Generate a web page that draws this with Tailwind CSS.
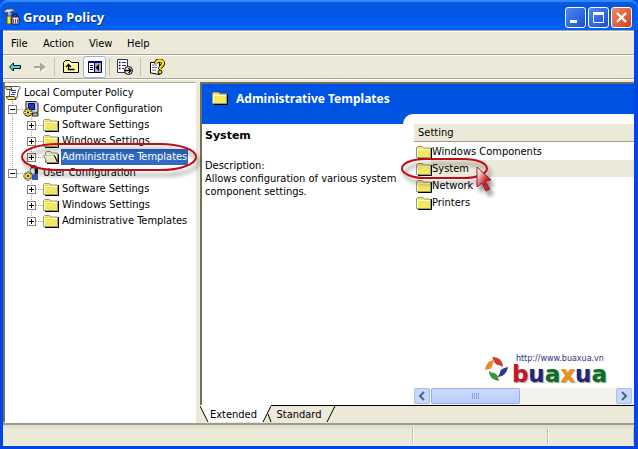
<!DOCTYPE html>
<html lang="en">
<head>
<meta charset="utf-8">
<title>Group Policy</title>
<script src="https://cdn.jsdelivr.net/npm/@tailwindcss/browser@4"></script>
</head>
<body class="bg-[#0a50e0]">
<svg class="absolute h-0 w-0" aria-hidden="true">
  <defs>
    <pattern id="dots" width="2" height="2" patternUnits="userSpaceOnUse"><path fill="#ffee00" d="M0 0h2v2h-2z"/><path fill="#e6e3c0" d="M0 0h1v1h-1zM1 1h1v1h-1z"/></pattern>
    <filter id="soft" x="-20%" y="-40%" width="150%" height="200%"><feDropShadow dx="3" dy="5" stdDeviation="2" flood-opacity=".45"/></filter>
  </defs>
  <symbol id="folder" viewBox="0 0 16 14"><path d="M2 13.500h13.500V3" fill="none" stroke="#000"/><path d="M.5 12.500v-10l1-1h5l1.500 1.500h6.500v9.500z" fill="url(#dots)" stroke="#9c9a70"/><path d="M1.500 12V4.500H14" fill="none" stroke="#fffde0"/></symbol>
  <symbol id="openfolder" viewBox="0 0 16 14"><path d="M2.500 12.500v-10l1-1h4l1.500 1.500h5.500v9.500z" fill="#f4f0b4" stroke="#88887c"/><path d="M15.500 4v9.500H4" fill="none" stroke="#000"/><path d="M.5 5.500h10.500l3.500 7H4z" fill="#e9e6c0" stroke="#88887c"/><path d="M1.500 6h9" stroke="#fff"/><path d="M11.500 5.500l3 6.500" stroke="#000"/></symbol>
</svg>
<div class="flex min-h-screen flex-col rounded-t-lg border-r-4 border-b-3 border-l-3 border-[#0046e6] bg-[#ece9d8] font-['DejaVu_Sans_Condensed','DejaVu_Sans',sans-serif] text-[11px] leading-4 text-black">
  <header class="-mr-1 -ml-[3px] flex h-[30px] shrink-0 items-center rounded-t-lg bg-linear-to-b from-[#0a55dc] via-[#0058e6] to-[#0060f8] pt-1 pr-1.5 pl-1 shadow-[inset_0_2px_1px_#2f8cff]">
    <svg class="h-4 w-4" viewBox="0 0 16 16" aria-hidden="true"><path d="M0 2l3-2h6l2 3-3-1-2 2H4L3 3 1 4z" fill="#ddd" stroke="#333" stroke-width=".7"/><path d="M4 4h3v4H4z" fill="#aaa"/><path d="M3 7h4v8H3z" fill="#ffe84a" stroke="#655500"/><path d="M8 8h7v7H8z" fill="#eee" stroke="#222"/><path d="M9 7V5h4v2" fill="none" stroke="#111"/><path d="M9.500 10v4M11.500 10v4M13.500 10v4" stroke="#8d338d"/></svg>
    <h1 class="ml-[3px] flex-1 font-['Noto_Sans',sans-serif] text-[13px] leading-5 font-bold text-white [text-shadow:1px_1px_0_#0a2c8c]">Group Policy</h1>
    <div class="flex gap-0.5">
      <button aria-label="Minimize" class="h-[21px] w-[21px] rounded-[3px] border border-white bg-linear-to-br from-[#4b88f5] to-[#1c4fd4]"><svg viewBox="0 0 19 19" aria-hidden="true"><path d="M4 12h7v3H4z" fill="#fff"/></svg></button>
      <button aria-label="Maximize" class="h-[21px] w-[21px] rounded-[3px] border border-white bg-linear-to-br from-[#4b88f5] to-[#1c4fd4]"><svg viewBox="0 0 19 19" aria-hidden="true"><path d="M4.500 5v9.500h10V5" fill="none" stroke="#fff"/><path d="M4 4h11v3H4z" fill="#fff"/></svg></button>
      <button aria-label="Close" class="h-[21px] w-[21px] rounded-[3px] border border-white bg-linear-to-br from-[#f08a68] to-[#d03c10]"><svg viewBox="0 0 19 19" aria-hidden="true"><path d="M5 5l9 9M14 5l-9 9" stroke="#fff" stroke-width="2.400"/></svg></button>
    </div>
  </header>

  <nav class="flex h-[25px] shrink-0 items-center border-t border-b border-t-[#aca899] border-b-[#aca899] pt-0.5 pl-2 shadow-[inset_1px_1px_0_#fff]" aria-label="Menu">
    <button class="w-8 text-left">File</button>
    <button class="w-[46px] text-left">Action</button>
    <button class="w-[38px] text-left">View</button>
    <button class="w-8 text-left">Help</button>
  </nav>

  <div class="flex h-6 shrink-0 items-center border-b border-[#aca899] shadow-[inset_1px_1px_0_#fff]" role="toolbar" aria-label="Toolbar">
    <button aria-label="Back" class="w-6"><svg class="mx-auto h-4 w-4" viewBox="0 0 16 16"><path d="M2.500 8l4-4v2.500h7v3h-7V12z" fill="#20e8f0" stroke="#000" stroke-linejoin="round"/></svg></button>
    <button aria-label="Forward" class="ml-px w-6"><svg class="mx-auto h-4 w-4" viewBox="0 0 16 16"><path d="M3 10h7v3l5-4" stroke="#fff" fill="none"/><path d="M2 7h6V3.500L13.500 8 8 12.500V9H2z" fill="#aca899"/></svg></button>
    <span class="mr-1 ml-0.5 h-[18px] w-px bg-[#c5c2b2]"></span>
    <button aria-label="Up one level" class="w-6"><svg class="mx-auto h-4 w-4" viewBox="0 0 16 16"><path d="M.5 13.500v-10l2-2h4l2 2h7v10z" fill="#fff8a0" stroke="#000"/><path d="M5.500 6v4.500h6M3 8l2.500-2.500L8 8" fill="none" stroke="#000" stroke-width="1.300"/></svg></button>
    <button aria-label="Show or hide console tree" aria-pressed="true" class="h-[22px] w-[23px] rounded-[3px] border border-[#98b5e2] bg-white"><svg class="mx-auto h-[14px] w-4" viewBox="0 0 16 14"><path d="M1.500 1.500h13v11h-13z" fill="#fff" stroke="#000068"/><path d="M1 1h14v2H1z" fill="#000080"/><path d="M8 3h6v9H8z" fill="#aaa"/><path d="M7.500 3v10M3 5.500h3M3 7.500h3M3 9.500h3" stroke="#000068"/><path d="M12 4v7L8.500 7.500z" fill="#000"/></svg></button>
    <span class="mr-1 ml-[3px] h-[18px] w-px bg-[#c5c2b2]"></span>
    <button aria-label="Export list" class="w-[22px]"><svg class="mx-auto h-4 w-4" viewBox="0 0 16 16"><path d="M.5.5h10v13H.5z" fill="#fff" stroke="#303060"/><path d="M2 3.500h1.500M2 6.500h1.500M2 9.500h1.500" stroke="#000" stroke-width="1.500"/><path d="M5 3.500h4M5 6.500h4M5 9.500h2" stroke="#2020a0"/><circle cx="11.500" cy="11.500" r="4" fill="#eee" stroke="#000"/><path d="M8 11.500h6M11.500 9l2.500 2.500-2.500 2.500" stroke="#000" stroke-width="1.300" fill="none"/></svg></button>
    <span class="mr-1 ml-1 h-[18px] w-px bg-[#c5c2b2]"></span>
    <button aria-label="Help" class="w-6"><svg class="mx-auto h-4 w-4" viewBox="0 0 16 16"><path d="M1.500 3.500h9v12l-9-1.500z" fill="#fff" stroke="#000"/><path d="M3 6h5M3 8.500h5M3 11h4" stroke="#777"/><path d="M7 4.500C7 .5 14 .5 14 4.500c0 2.500-3 2.300-3 5.500" fill="none" stroke="#000" stroke-width="4"/><path d="M7 4.500C7 .5 14 .5 14 4.500c0 2.500-3 2.300-3 5.500" fill="none" stroke="#ffe800" stroke-width="2.300"/><circle cx="11" cy="13" r="2" fill="#ffe800" stroke="#000"/></svg></button>
  </div>

  <main class="flex min-h-[345px] flex-1 gap-1 border-b-2 border-[#9d9a8b] pt-[3px] shadow-[inset_0_1px_0_#fff]">
    <section class="relative w-[193px] shrink-0 border-t border-r border-b border-l-2 border-t-[#aca899] border-r-white border-b-white border-l-[#716f64] bg-white pt-0.5" aria-label="Console tree">
      <ul>
        <li>
          <div class="flex h-4 items-center"><svg class="h-4 w-4" viewBox="0 0 16 16" aria-hidden="true"><path d="M5 1.500h8.500c2 0 2 3 0 3L12 13H4l1-8z" fill="#fff" stroke="#555"/><path d="M.5 1.500h5l1.500 3H1.500z" fill="#ffe94a" stroke="#444"/><path d="M1 11.500h8.500l1.500 3H3z" fill="#ffe94a" stroke="#444"/><path d="M6 5.500h5M7 7.500h4M6 9.500h4" stroke="#1838d0"/></svg><span class="ml-[3px]">Local Computer Policy</span></div>
          <ul class="ml-[7px] bg-[repeating-linear-gradient(to_bottom,#aca899_0_1px,transparent_1px_2px)] bg-[length:1px_72px] bg-no-repeat">
            <li>
              <div class="-ml-1 flex h-4 items-center"><button aria-label="Collapse Computer Configuration" class="h-[9px] w-[9px] border border-[#848478] bg-white"><svg class="h-[7px] w-[7px]" viewBox="0 0 7 7"><path d="M1 3.500h5" stroke="#000"/></svg></button><i class="w-1.5 border-t border-dotted border-[#aca899]"></i>
                <svg class="h-4 w-4" viewBox="0 0 16 16" aria-hidden="true"><path d="M3 .5h10l2 2v9l-2 1H3z" fill="#c9c9d4" stroke="#222"/><path d="M5.500 2.500h6v6h-6z" fill="#1838c8" stroke="#000060"/><path d="M10 12h5v3H9z" fill="#bbb" stroke="#222"/><path d="M5 7v9M.5 11.500h9M2 8.500l6 6M8 8.500l-6 6" stroke="#222" stroke-width="2.400"/><path d="M5 7.500v8M1 11.500h8M2.500 9l5 5M7.500 9l-5 5" stroke="#ffe94a" stroke-width="1.400"/><circle cx="5" cy="11.500" r="1"/></svg><span class="ml-1">Computer Configuration</span></div>
              <ul class="ml-[19px] bg-[repeating-linear-gradient(to_bottom,#aca899_0_1px,transparent_1px_2px)] bg-[length:1px_40px] bg-no-repeat">
                <li class="-ml-1 flex h-4 items-center"><button aria-label="Expand" class="h-[9px] w-[9px] border border-[#848478] bg-white"><svg class="h-[7px] w-[7px]" viewBox="0 0 7 7"><path d="M1 3.500h5M3.500 1v5" stroke="#000"/></svg></button><i class="w-[7px] border-t border-dotted border-[#aca899]"></i><svg class="h-[14px] w-4"><use href="#folder"/></svg><span class="ml-0.5 px-px">Software Settings</span></li>
                <li class="-ml-1 flex h-4 items-center"><button aria-label="Expand" class="h-[9px] w-[9px] border border-[#848478] bg-white"><svg class="h-[7px] w-[7px]" viewBox="0 0 7 7"><path d="M1 3.500h5M3.500 1v5" stroke="#000"/></svg></button><i class="w-[7px] border-t border-dotted border-[#aca899]"></i><svg class="h-[14px] w-4"><use href="#folder"/></svg><span class="ml-0.5 px-px">Windows Settings</span></li>
                <li class="-ml-1 flex h-4 items-center"><button aria-label="Expand" class="h-[9px] w-[9px] border border-[#848478] bg-white"><svg class="h-[7px] w-[7px]" viewBox="0 0 7 7"><path d="M1 3.500h5M3.500 1v5" stroke="#000"/></svg></button><i class="w-[7px] border-t border-dotted border-[#aca899]"></i><svg class="h-[14px] w-4"><use href="#openfolder"/></svg><span class="ml-0.5 bg-[#316ac5] px-px whitespace-nowrap text-white">Administrative Templates</span></li>
              </ul>
            </li>
            <li>
              <div class="-ml-1 flex h-4 items-center"><button aria-label="Collapse User Configuration" class="h-[9px] w-[9px] border border-[#848478] bg-white"><svg class="h-[7px] w-[7px]" viewBox="0 0 7 7"><path d="M1 3.500h5" stroke="#000"/></svg></button><i class="w-1.5 border-t border-dotted border-[#aca899]"></i>
                <svg class="h-4 w-4" viewBox="0 0 16 16" aria-hidden="true"><path d="M7 1c3-2 8-1 8 4v4h-3z" fill="#111"/><path d="M8 3h4v6H9L7 6z" fill="#fff" stroke="#222" stroke-width=".7"/><path d="M9 10l6-2v7H9z" fill="#3058c8"/><path d="M5 6.500v9M.5 11h9M2 8l6 6M8 8l-6 6" stroke="#222" stroke-width="2.400"/><path d="M5 7v8M1 11h8M2.500 8.500l5 5M7.500 8.500l-5 5" stroke="#ffe94a" stroke-width="1.400"/><circle cx="5" cy="11" r="1"/></svg><span class="ml-1">User Configuration</span></div>
              <ul class="ml-[19px] bg-[repeating-linear-gradient(to_bottom,#aca899_0_1px,transparent_1px_2px)] bg-[length:1px_40px] bg-no-repeat">
                <li class="-ml-1 flex h-4 items-center"><button aria-label="Expand" class="h-[9px] w-[9px] border border-[#848478] bg-white"><svg class="h-[7px] w-[7px]" viewBox="0 0 7 7"><path d="M1 3.500h5M3.500 1v5" stroke="#000"/></svg></button><i class="w-[7px] border-t border-dotted border-[#aca899]"></i><svg class="h-[14px] w-4"><use href="#folder"/></svg><span class="ml-0.5 px-px">Software Settings</span></li>
                <li class="-ml-1 flex h-4 items-center"><button aria-label="Expand" class="h-[9px] w-[9px] border border-[#848478] bg-white"><svg class="h-[7px] w-[7px]" viewBox="0 0 7 7"><path d="M1 3.500h5M3.500 1v5" stroke="#000"/></svg></button><i class="w-[7px] border-t border-dotted border-[#aca899]"></i><svg class="h-[14px] w-4"><use href="#folder"/></svg><span class="ml-0.5 px-px">Windows Settings</span></li>
                <li class="-ml-1 flex h-4 items-center"><button aria-label="Expand" class="h-[9px] w-[9px] border border-[#848478] bg-white"><svg class="h-[7px] w-[7px]" viewBox="0 0 7 7"><path d="M1 3.500h5M3.500 1v5" stroke="#000"/></svg></button><i class="w-[7px] border-t border-dotted border-[#aca899]"></i><svg class="h-[14px] w-4"><use href="#folder"/></svg><span class="ml-0.5 px-px whitespace-nowrap">Administrative Templates</span></li>
              </ul>
            </li>
          </ul>
        </li>
      </ul>
      <svg class="pointer-events-none absolute top-[57px] left-[14px] z-10 h-[44px] w-[190px]" viewBox="0 0 190 44" fill="none" aria-hidden="true"><rect x="3" y="4" width="174" height="26" rx="36" ry="13" stroke="#c01018" stroke-width="2" filter="url(#soft)"/></svg>
    </section>

    <section class="flex min-w-0 flex-1 flex-col" aria-label="Details">
      <div class="flex flex-1 flex-col border-t-2 border-l-2 border-[#716f64] bg-white">
        <div class="flex h-10 shrink-0 bg-[#0054e3]">
          <div class="flex w-[201px] shrink-0 items-start pt-[7px] pl-2.5"><svg class="h-[14px] w-4 shrink-0"><use href="#folder"/></svg><h2 class="ml-2 font-['Noto_Sans',sans-serif] text-[12px] leading-4 font-bold whitespace-nowrap text-white">Administrative Templates</h2></div>
          <div class="mt-[30px] flex-1 rounded-tl-[10px] bg-white"></div>
        </div>
        <div class="flex flex-1">
          <div class="w-[212px] shrink-0 pt-1 pl-[3px]">
            <h3 class="font-['DejaVu_Sans',sans-serif] text-[11px] leading-4 font-bold">System</h3>
            <p class="mt-[15px] w-[200px] leading-[13px]">Description:<br>Allows configuration of various system component settings.</p>
          </div>
          <div class="relative flex min-w-0 flex-1 flex-col">
            <table class="w-full border-separate border-spacing-0">
              <thead><tr><th class="h-[17px] border-b border-[#9d9a8b] bg-[#ece9d8] p-0 pt-px pl-1 text-left leading-4 font-normal">Setting</th></tr><tr class="h-px"></tr></thead>
              <tbody>
                <tr><td class="h-[17px] p-0 pl-0.5"><div class="flex items-center"><svg class="h-[14px] w-4"><use href="#folder"/></svg>Windows Components</div></td></tr>
                <tr><td class="h-[17px] bg-linear-to-r from-white from-[17px] to-[#ece9d8] to-[17px] p-0 pl-0.5"><div class="flex items-center"><svg class="h-[14px] w-4"><use href="#folder"/></svg>System</div></td></tr>
                <tr><td class="h-[17px] p-0 pl-0.5"><div class="flex items-center"><svg class="h-[14px] w-4"><use href="#folder"/></svg>Network</div></td></tr>
                <tr><td class="h-[17px] p-0 pl-0.5"><div class="flex items-center"><svg class="h-[14px] w-4"><use href="#folder"/></svg>Printers</div></td></tr>
              </tbody>
            </table>
            <svg class="pointer-events-none absolute top-[30px] left-[-16px] h-[42px] w-[104px]" viewBox="0 0 104 42" fill="none" aria-hidden="true"><rect x="4" y="5" width="85" height="19" rx="23" ry="9.500" stroke="#c01018" stroke-width="2" filter="url(#soft)"/></svg>
            <svg class="pointer-events-none absolute top-[42px] left-[62px] h-8 w-6" viewBox="0 0 24 32" aria-hidden="true"><defs><linearGradient id="arrow" x1="0" y1="0" x2="1" y2="1"><stop offset=".1" stop-color="#fff"/><stop offset=".6" stop-color="#d02028"/></linearGradient></defs><path d="M1 1l14 13-6 1 5 8-4 2-4-8-5 4z" fill="url(#arrow)" stroke="#902028" filter="url(#soft)"/></svg>
            <div class="mt-auto mr-[27px] mb-[3px] flex items-end justify-end gap-1">
              <svg class="mb-1 h-6 w-[23px]" viewBox="0 0 23 24" aria-hidden="true"><path d="M7 0c7 0 11 4 11 10-2-1-3-2-5-2-4-1-4-5-6-8z" fill="#d03a28"/><path d="M23 10c-1 6-5 10-11 10 2-2 3-3 3-5 1-4 5-4 8-5z" fill="#283c90"/><path d="M14 24C8 23 4 20 4 14c2 1 3 2 5 2 4 1 4 5 5 8z" fill="#38953c"/><path d="M0 13C1 7 4 3 10 3 8 5 8 7 7 9c-1 4-4 3-7 4z" fill="#f0862c"/></svg>
              <div class="font-['DejaVu_Sans',sans-serif]"><div class="pl-1 text-[8px] leading-[10px] text-[#303080]">http://www.buaxua.vn</div><div class="text-[23px] leading-[21px] font-bold [text-shadow:1px_1px_1px_#999]"><span class="text-[#c01828]">b</span><span class="text-[#242480]">u</span><span class="text-[#087020]">a</span><span class="text-[#f09010]">x</span><span class="text-[#242480]">u</span><span class="text-[#087020]">a</span></div></div>
            </div>
            <div class="flex h-[17px] shrink-0 bg-[#f3f2ed]">
              <button aria-label="Scroll left" class="h-4 w-4 rounded-xs border border-[#a8bff0] bg-[#c8d7fc]"><svg viewBox="0 0 14 14"><path d="M9 3L5 7l4 4" fill="none" stroke="#4d6185" stroke-width="2"/></svg></button>
              <div class="flex flex-1"><div class="ml-px flex h-4 w-[48%] items-center justify-center rounded-xs border border-[#98b0e8] bg-linear-to-b from-[#cddbff] to-[#b8cdfb]"><svg class="h-1.5 w-2" viewBox="0 0 8 6" aria-hidden="true"><path d="M.5 0v6M2.500 0v6M4.500 0v6M6.500 0v6" stroke="#8ca5df"/></svg></div></div>
              <button aria-label="Scroll right" class="mr-0.5 h-4 w-4 rounded-xs border border-[#a8bff0] bg-[#c8d7fc]"><svg viewBox="0 0 14 14"><path d="M5 3l4 4-4 4" fill="none" stroke="#4d6185" stroke-width="2"/></svg></button>
            </div>
          </div>
        </div>
      </div>
      <div class="flex h-[18px] shrink-0" role="tablist">
        <button role="tab" aria-selected="true" class="relative h-[18px] w-[71px] pt-0.5 pr-1"><svg class="absolute inset-0 h-full w-full" viewBox="0 0 71 18" aria-hidden="true"><path d="M0 0l8 17h55l8-17z" fill="#fff"/><path d="M0 1l8 16M63 17l8-16" stroke="#000"/></svg><span class="relative">Extended</span></button>
        <button role="tab" aria-selected="false" class="relative h-[18px] w-[64px] border-t border-black pt-px pr-2"><svg class="absolute inset-0 h-full w-full overflow-visible" viewBox="0 0 64 17" aria-hidden="true"><path d="M-3 8l3 8M56 16l8-16" stroke="#000"/></svg><span class="relative">Standard</span></button>
        <div class="flex-1 border-t border-black"></div>
      </div>
    </section>
  </main>

  <footer class="flex h-[21px] shrink-0 bg-linear-to-b from-[#dedbc9] to-[#ece9d8] to-25% py-0.5">
    <div class="w-[410px] border-r border-[#c5c2b2]"></div>
    <div class="flex-1 border-r border-l border-r-[#c5c2b2] border-l-white"></div>
    <div class="w-[86px] border-r border-l border-r-[#c5c2b2] border-l-white"></div>
  </footer>
</div>
</body>
</html>
